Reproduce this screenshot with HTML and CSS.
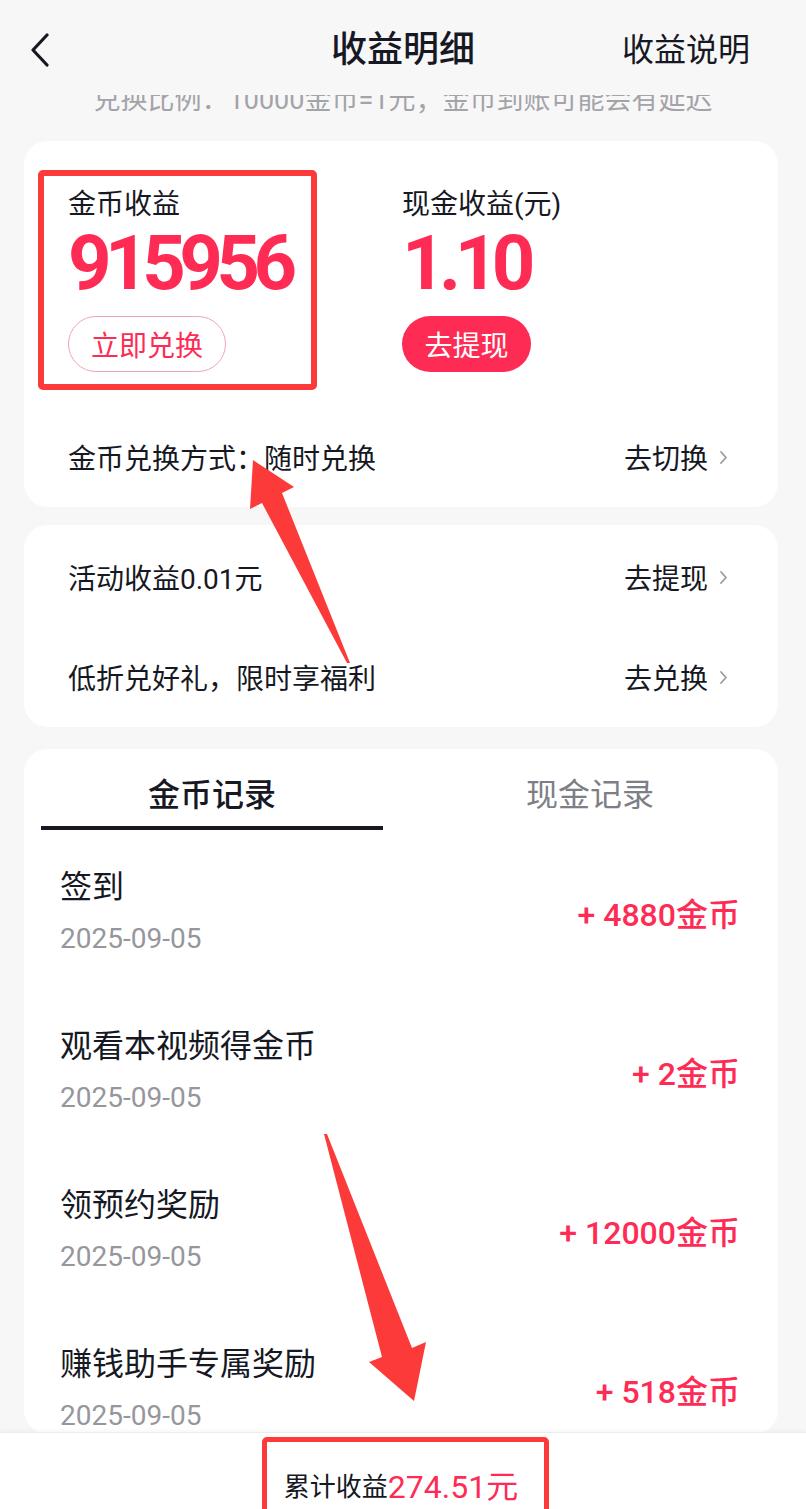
FILE: index.html
```html
<!DOCTYPE html>
<html lang="zh-CN">
<head>
<meta charset="utf-8">
<title>收益明细</title>
<link rel="stylesheet" href="styles.css">
</head>
<body>
<div class="app">
  <header class="topbar">
    <div class="back">
      <svg width="20" height="34" viewBox="0 0 20 34"><path d="M17 2 L3 17 L17 32" fill="none" stroke="#161823" stroke-width="3.2" stroke-linecap="round" stroke-linejoin="round"/></svg>
    </div>
    <div class="title">收益明细</div>
    <div class="help">收益说明</div>
  </header>

  <main class="scroll">
    <div class="notice"><p>兑换比例：10000金币=1元；金币到账可能会有延迟</p></div>

    <section class="card earn">
      <div class="earn-grid">
        <div class="earn-col">
          <div class="earn-label">金币收益</div>
          <div class="earn-num">915956</div>
          <div class="btn btn-outline">立即兑换</div>
        </div>
        <div class="earn-col">
          <div class="earn-label">现金收益(元)</div>
          <div class="earn-num">1.10</div>
          <div class="btn btn-fill">去提现</div>
        </div>
      </div>
      <div class="row">
        <span class="row-text">金币兑换方式：随时兑换</span>
        <span class="row-link">去切换<svg class="chev" width="9" height="15" viewBox="0 0 9 15"><path d="M2 2 L7 7.5 L2 13" fill="none" stroke="#9a9a9e" stroke-width="1.8" stroke-linecap="round" stroke-linejoin="round"/></svg></span>
      </div>
    </section>

    <section class="card links">
      <div class="row">
        <span class="row-text">活动收益0.01元</span>
        <span class="row-link">去提现<svg class="chev" width="9" height="15" viewBox="0 0 9 15"><path d="M2 2 L7 7.5 L2 13" fill="none" stroke="#9a9a9e" stroke-width="1.8" stroke-linecap="round" stroke-linejoin="round"/></svg></span>
      </div>
      <div class="row">
        <span class="row-text">低折兑好礼，限时享福利</span>
        <span class="row-link">去兑换<svg class="chev" width="9" height="15" viewBox="0 0 9 15"><path d="M2 2 L7 7.5 L2 13" fill="none" stroke="#9a9a9e" stroke-width="1.8" stroke-linecap="round" stroke-linejoin="round"/></svg></span>
      </div>
    </section>

    <section class="card records">
      <div class="tabs">
        <div class="tab active">金币记录</div>
        <div class="tab">现金记录</div>
      </div>
      <ul class="list">
        <li class="item">
          <div class="item-main"><div class="item-title">签到</div><div class="item-date">2025-09-05</div></div>
          <div class="item-amt">+ 4880金币</div>
        </li>
        <li class="item">
          <div class="item-main"><div class="item-title">观看本视频得金币</div><div class="item-date">2025-09-05</div></div>
          <div class="item-amt">+ 2金币</div>
        </li>
        <li class="item">
          <div class="item-main"><div class="item-title">领预约奖励</div><div class="item-date">2025-09-05</div></div>
          <div class="item-amt">+ 12000金币</div>
        </li>
        <li class="item">
          <div class="item-main"><div class="item-title">赚钱助手专属奖励</div><div class="item-date">2025-09-05</div></div>
          <div class="item-amt">+ 518金币</div>
        </li>
      </ul>
    </section>
  </main>

  <footer class="totalbar">
    <span class="total-label">累计收益</span><span class="total-num">274.51元</span>
  </footer>

  <div class="mark mark-earn"></div>
  <div class="mark mark-total"></div>
  <svg class="arrows" width="806" height="1509" viewBox="0 0 806 1509">
    <polygon points="253,460 294,487 282,493 350,663 347,663 262,503 250,509" fill="#fc3a3a"/>
    <polygon points="324,1134 327,1134 412,1348 426,1342 414,1401 369,1362 382,1357" fill="#fc3a3a"/>
  </svg>
</div>
</body>
</html>
```

FILE: styles.css
```css
* { box-sizing: border-box; }
html, body { margin: 0; padding: 0; }
body {
  background: #f7f7f7;
  font-family: Roboto, "Noto Sans CJK SC", sans-serif;
  color: #161823;
}
.app {
  position: relative;
  width: 806px;
  height: 1509px;
  overflow: hidden;
  display: flex;
  flex-direction: column;
}
.topbar {
  height: 95px;
  flex: none;
  display: grid;
  grid-template-columns: 1fr auto 1fr;
  align-items: center;
  padding: 4px 56px 0 56px;
  background: #f7f7f7;
}
.back { display: flex; align-items: center; margin-left: -26px; }
.title {
  font-size: 36px;
  font-weight: 500;
  line-height: 44px;
  color: #161823;
}
.help {
  justify-self: end;
  font-size: 32px;
  line-height: 44px;
  color: #161823;
}
.scroll {
  flex: 1;
  overflow: hidden;
  display: flex;
  flex-direction: column;
}
.notice {
  height: 46px;
  flex: none;
  overflow: hidden;
  text-align: center;
}
.notice p {
  margin: -10px 0 0;
  font-size: 27px;
  line-height: 30px;
  color: #a3a3a8;
  white-space: nowrap;
}
.card {
  flex: none;
  margin: 0 28px 0 24px;
  background: #fff;
  border-radius: 24px;
}
.earn { padding-top: 44px; }
.earn-grid {
  display: grid;
  grid-template-columns: 334px 1fr;
  padding-left: 44px;
}
.earn-label {
  font-size: 28px;
  line-height: 40px;
  color: #161823;
}
.earn-num {
  font-size: 76px;
  font-weight: 700;
  line-height: 76px;
  letter-spacing: -6.5px;
  color: #fe2c55;
}
.btn {
  margin-top: 15px;
  height: 56px;
  border-radius: 28px;
  display: flex;
  align-items: center;
  justify-content: center;
  font-size: 28px;
  padding: 0;
  white-space: nowrap;
}
.btn-outline {
  border: 1px solid #f0a3b3;
  color: #fe2c55;
  width: 158px;
}
.btn-fill {
  background: #fe2c55;
  color: #fff;
  width: 129px;
}
.row {
  height: 100px;
  display: flex;
  align-items: center;
  justify-content: space-between;
  padding: 0 50px 0 44px;
  font-size: 28px;
  color: #161823;
}
.earn .row { margin-top: 35px; }
.row-link { display: flex; align-items: center; gap: 11px; }
.chev { display: block; }
.links { margin-top: 18px; padding-top: 2px; }
.records {
  margin-top: 22px;
  flex: 1;
  padding-top: 24px;
}
.tabs {
  display: flex;
  gap: 36px;
  padding: 0 17px;
}
.tab {
  width: 342px;
  text-align: center;
  font-size: 32px;
  line-height: 44px;
  padding-bottom: 9px;
  border-bottom: 4px solid transparent;
  color: #7e7f86;
}
.tab.active {
  color: #161823;
  font-weight: 500;
  border-bottom-color: #161823;
}
.list {
  list-style: none;
  margin: 0;
  padding: 35px 38px 0 36px;
  display: flex;
  flex-direction: column;
  gap: 67px;
}
.item {
  display: flex;
  align-items: center;
  justify-content: space-between;
}
.item-title {
  font-size: 32px;
  line-height: 44px;
  color: #161823;
}
.item-date {
  margin-top: 12px;
  font-size: 28px;
  line-height: 36px;
  color: #96969c;
}
.item-amt {
  font-size: 32px;
  font-weight: 500;
  color: #fe2c55;
  padding-top: 2px;
}
.totalbar {
  position: relative;
  flex: none;
  height: 77px;
  background: #fff;
  border-top: 1px solid #ececec;
  box-shadow: 0 -2px 4px rgba(0,0,0,0.03);
  display: flex;
  justify-content: center;
  align-items: center;
  padding-top: 26px;
  padding-right: 4px;
}
.total-label { font-size: 26px; color: #161823; }
.total-num { font-size: 32px; color: #fe2c55; }
.mark {
  position: absolute;
  border: 6px solid #fc3a3a;
  border-radius: 5px;
  pointer-events: none;
}
.mark-earn { left: 38px; top: 170px; width: 279px; height: 220px; }
.mark-total { left: 262px; top: 1437px; width: 287px; height: 80px; border-width: 5px; }
.arrows {
  position: absolute;
  left: 0;
  top: 0;
  pointer-events: none;
}
```
